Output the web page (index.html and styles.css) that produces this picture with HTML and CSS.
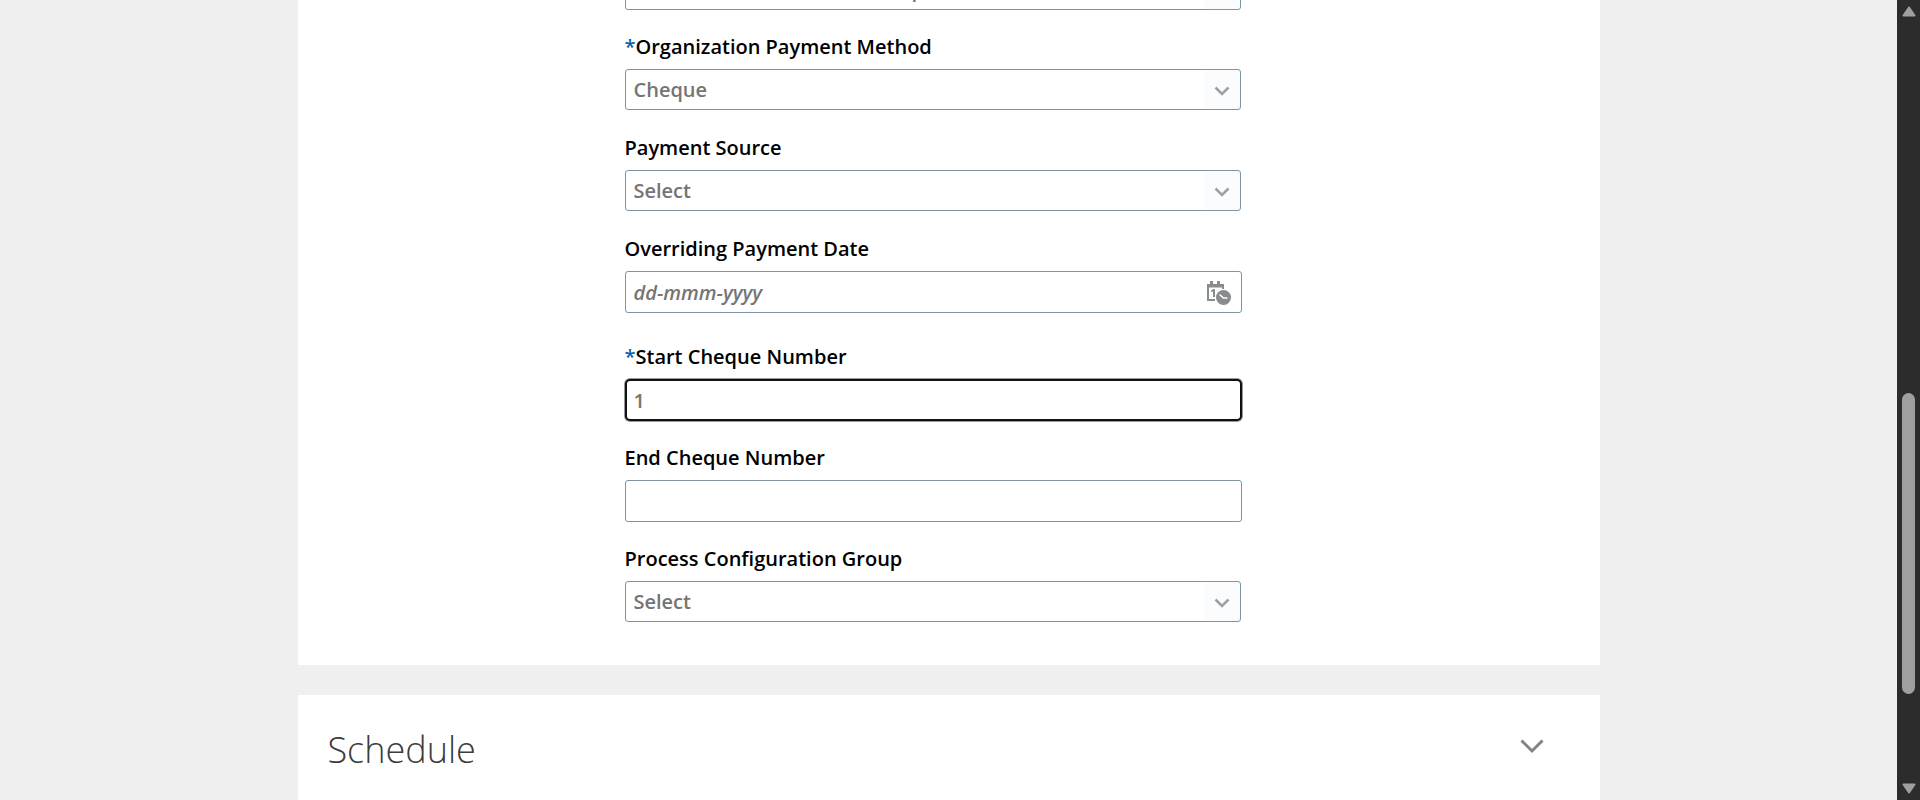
FILE: index.html
```html
<!DOCTYPE html>
<html lang="en">
<head>
<meta charset="utf-8">
<title>Submit Flow</title>
<link rel="stylesheet" href="styles.css">
</head>
<body>
<main class="page">
  <section class="card card--form">
    <div class="clipped">
      <div class="control">
        <select class="box box--select box--scrolled" aria-label="Parameter"><option>p</option></select>
      </div>
    </div>
    <div class="field">
      <label class="label" for="method"><span class="required">*</span>Organization Payment Method</label>
      <div class="control">
        <select class="box box--select" id="method"><option>Cheque</option></select>
        <svg class="chevron" viewBox="0 0 16 12" aria-hidden="true"><path d="M1.500 2.500 8 9 14.500 2.500"/></svg>
      </div>
    </div>
    <div class="field">
      <label class="label" for="source">Payment Source</label>
      <div class="control">
        <select class="box box--select" id="source"><option>Select</option></select>
        <svg class="chevron" viewBox="0 0 16 12" aria-hidden="true"><path d="M1.500 2.500 8 9 14.500 2.500"/></svg>
      </div>
    </div>
    <div class="field field--date">
      <label class="label" for="date">Overriding Payment Date</label>
      <div class="control">
        <input class="box box--date" id="date" type="text" placeholder="dd-mmm-yyyy">
        <button class="picker" type="button" aria-label="Select date">
          <svg class="picker-icon" viewBox="0 0 24 24" aria-hidden="true">
            <path class="ink" d="M0 3h3V0h3v3h4V0h3v3h4v5h-2V6.500H2V18h6v2H0z"/>
            <path class="ink" d="M4 9.500 6.500 8H8v8H6v-5.500l-2 .6z"/>
            <circle class="ink" cx="16.500" cy="16.500" r="7.500"/>
            <path class="hands" d="M12.500 13.500l4 3.500h4"/>
          </svg>
        </button>
      </div>
    </div>
    <div class="field">
      <label class="label" for="start"><span class="required">*</span>Start Cheque Number</label>
      <div class="control">
        <input class="box box--active" id="start" type="text" value="1">
      </div>
    </div>
    <div class="field">
      <label class="label" for="end">End Cheque Number</label>
      <div class="control">
        <input class="box" id="end" type="text">
      </div>
    </div>
    <div class="field">
      <label class="label" for="group">Process Configuration Group</label>
      <div class="control">
        <select class="box box--select" id="group"><option>Select</option></select>
        <svg class="chevron" viewBox="0 0 16 12" aria-hidden="true"><path d="M1.500 2.500 8 9 14.500 2.500"/></svg>
      </div>
    </div>
  </section>
  <section class="card card--schedule">
    <h2 class="heading">Schedule</h2>
    <button class="expand" type="button" aria-label="Expand Schedule">
      <svg class="expand-icon" viewBox="0 0 24 16" aria-hidden="true"><path d="M1.500 2.500 12 13 22.500 2.500"/></svg>
    </button>
  </section>
</main>
<div class="scrollbar" aria-hidden="true">
  <svg class="arrow" viewBox="0 0 14 11"><path d="M7 1.500 12.500 9.500H1.500z"/></svg>
  <div class="track">
    <div class="track-above"></div>
    <div class="thumb"></div>
    <div class="track-below"></div>
  </div>
  <svg class="arrow" viewBox="0 0 14 11"><path d="M7 9.500 12.500 1.500H1.500z"/></svg>
</div>
</body>
</html>
```
FILE: styles.css
```css
* {
  box-sizing: border-box;
}

body {
  margin: 0;
  height: 100vh;
  display: flex;
  overflow: hidden;
  background: #f0f0f0;
  color: #000;
  font-family: "Segoe UI", "Open Sans", "Noto Sans", sans-serif;
  font-size: 20px;
  font-weight: 600;
}

.page {
  flex: 1;
  min-width: 0;
  overflow: hidden;
}

.card {
  max-width: 1302px;
  margin: 0 auto 30px;
  background: #fff;
}

.card--form {
  padding: 0 358px 42px 327px;
}

.clipped {
  height: 10px;
  display: flex;
  flex-direction: column;
  justify-content: flex-end;
  overflow: hidden;
}

.clipped .control {
  flex: none;
  min-height: 41px;
}

.field {
  padding-top: 23px;
}

.field--date {
  padding-bottom: 7px;
}

.label {
  display: block;
  height: 36px;
  line-height: 28px;
}

.required {
  color: #0066b3;
}

.control {
  position: relative;
  min-height: 42px;
}

.box {
  display: block;
  width: 100%;
  height: 42px;
  margin: 0;
  padding: 0 8px;
  border: 1px solid #8094a1;
  border-radius: 3px;
  outline: 0;
  background: #fff;
  color: #757575;
  font: inherit;
}

.box--select {
  appearance: none;
  width: calc(100% - 1px);
  height: 41px;
  background: linear-gradient(#fbfcfe, #fbfcfe) right / 36px 100% no-repeat #fff;
  opacity: 1;
}

.box--scrolled {
  padding-left: 286px;
}

.box--date {
  padding-right: 48px;
}

.box--date::placeholder {
  color: #757575;
  font-style: italic;
}

.box--active {
  border: 2px solid #111;
  border-radius: 5px;
  padding: 0 7px;
  box-shadow: 0 0 0 1px #999;
}

.chevron {
  position: absolute;
  top: 16px;
  right: 12px;
  width: 16px;
  height: 12px;
  fill: none;
  stroke: #a0a0a0;
  stroke-width: 2.500;
  pointer-events: none;
}

.picker {
  position: absolute;
  top: 10px;
  right: 11px;
  width: 24px;
  height: 24px;
  padding: 0;
  border: 0;
  background: none;
}

.picker-icon {
  display: block;
  width: 24px;
  height: 24px;
}

.ink {
  fill: #878c8f;
}

.hands {
  fill: none;
  stroke: #fff;
  stroke-width: 1.5;
}

.card--schedule {
  display: flex;
  justify-content: space-between;
  align-items: flex-start;
  min-height: 140px;
  padding: 26px 56px 0 30px;
}

.heading {
  margin: 0;
  color: #3c3c3c;
  font-family: "Segoe UI Light", "Open Sans Light", "Open Sans", sans-serif;
  font-size: 36px;
  font-weight: 300;
  line-height: 58px;
}

.expand {
  margin-top: 17px;
  padding: 0;
  border: 0;
  background: none;
}

.expand-icon {
  display: block;
  width: 24px;
  height: 16px;
  fill: none;
  stroke: #7f8487;
  stroke-width: 3;
}

.scrollbar {
  flex: none;
  width: 23px;
  display: flex;
  flex-direction: column;
  align-items: center;
  padding: 6px 0;
  background: #2c2c2c;
}

.arrow {
  flex: none;
  width: 14px;
  height: 11px;
  fill: #9f9f9f;
  stroke: #9f9f9f;
  stroke-width: 2;
  stroke-linejoin: round;
}

.track {
  flex: 1;
  display: flex;
  flex-direction: column;
}

.track-above {
  flex: 376;
}

.thumb {
  flex: 301;
  width: 13px;
  border-radius: 7px;
  background: #9f9f9f;
}

.track-below {
  flex: 89;
}
```
